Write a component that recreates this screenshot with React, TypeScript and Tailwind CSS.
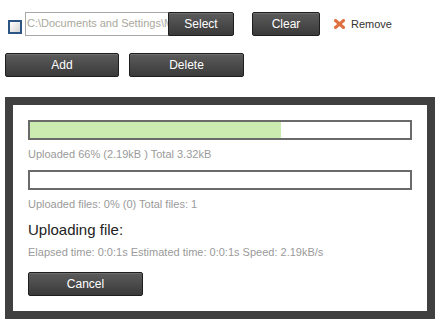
import React from "react"

const btn =
  "flex items-center justify-center h-[24px] rounded-[2px] border border-[#1e1e1e] bg-gradient-to-b from-[#5c5c5c] to-[#3a3a3a] text-white text-[12px] shadow-[inset_0_1px_0_rgba(255,255,255,0.12)]"

function Bar({ pct }: { pct: number }) {
  return (
    <div className="h-[20px] w-[384px] border-2 border-[#6a6a6a] bg-white">
      <div className="h-full bg-[#cbebb1]" style={{ width: `${pct}%` }} />
    </div>
  )
}

export default function App() {
  return (
    <div className="w-[445px] h-[326px] bg-white font-['Liberation_Sans',Arial,sans-serif] overflow-hidden">
      <div className="flex items-center h-[24px] mt-[12px]">
        <div className="ml-[8px] w-[14px] h-[14px] border-2 border-[#2b5584] bg-gradient-to-br from-white to-[#d4d4d4] mt-[6px]" />
        <div className="ml-[3px] flex h-[24px]">
          <div className="w-[143px] h-[24px] border border-r-0 border-[#a8a8a8] pl-[1px] pt-[2px] text-[11px] text-[#a9a89c] whitespace-nowrap overflow-hidden">
            C:\Documents and Settings\M
          </div>
          <div className={btn + " w-[66px] rounded-l-none"}>Select</div>
        </div>
        <div className={btn + " ml-[18px] w-[68px]"}>Clear</div>
        <svg className="ml-[14px]" width="11" height="10" viewBox="0 0 11 10">
          <path
            d="M1.5 1.5 L9.5 8.5 M9.5 1.5 L1.5 8.5"
            stroke="#e0703f"
            strokeWidth="3"
            strokeLinecap="square"
          />
        </svg>
        <span className="ml-[6px] text-[11px] text-[#333]">Remove</span>
      </div>

      <div className="flex gap-[10px] ml-[5px] mt-[17px]">
        <div className={btn + " w-[114px]"}>Add</div>
        <div className={btn + " w-[115px]"}>Delete</div>
      </div>

      <div className="ml-[5px] mt-[20px] w-[430px] h-[222px] border-[8px] border-[#404040] bg-white px-[15px] pt-[15px]">
        <Bar pct={66} />
        <div className="mt-[7px] text-[11px] leading-[14px] text-[#9a9a9a]">
          Uploaded 66% (2.19kB ) Total 3.32kB
        </div>
        <div className="mt-[9px]">
          <Bar pct={0} />
        </div>
        <div className="mt-[7px] text-[11px] leading-[14px] text-[#9a9a9a]">
          Uploaded files: 0% (0) Total files: 1
        </div>
        <div className="mt-[10px] text-[15px] leading-[18px] text-[#222]">Uploading file:</div>
        <div className="mt-[6px] text-[11px] leading-[14px] text-[#9a9a9a]">
          Elapsed time: 0:0:1s Estimated time: 0:0:1s Speed: 2.19kB/s
        </div>
        <div className={btn + " mt-[13px] w-[115px]"}>Cancel</div>
      </div>
    </div>
  )
}
